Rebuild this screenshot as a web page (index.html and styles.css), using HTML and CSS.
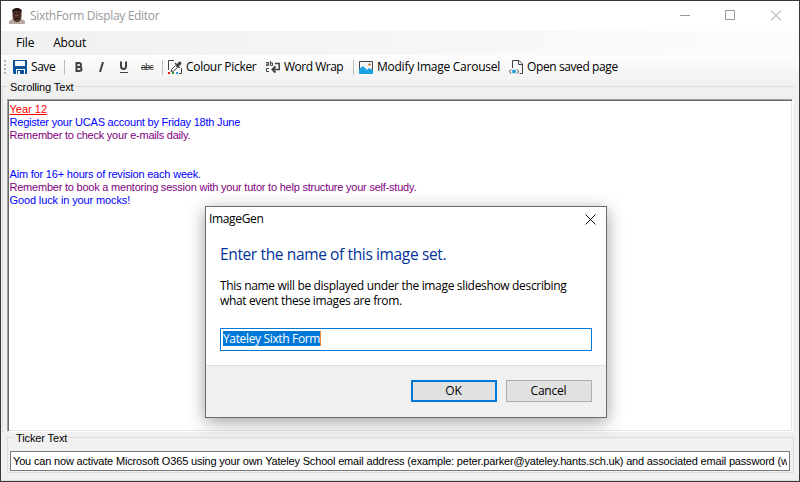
FILE: index.html
```
<!DOCTYPE html>
<html lang="en">
<head>
<meta charset="utf-8">
<title>SixthForm Display Editor</title>
<link rel="stylesheet" href="styles.css">
</head>
<body>
<div class="window">
  <header class="titlebar">
    <svg class="avatar" width="16" height="16" viewBox="0 0 16 16"><path d="M0 16V13L5 10H11L16 13V16Z" fill="#b9a7a0"/><path d="M3.500 2Q8-2 12.500 2V8Q12 14 8 14Q4 14 3.500 8Z" fill="#4d2f25"/><path d="M3.500 4V2Q8-2 12.500 2V4Q8 2 3.500 4Z" fill="#20130f"/><path d="M5 5.500H7M9 5.500H11M6 10.500H10" stroke="#24130e"/><path d="M6 7H9V8H6Z" fill="#795044"/></svg>
    <span class="title">SixthForm Display Editor</span>
    <svg class="controls" width="102" height="12" viewBox="0 0 102 12" fill="none" stroke="#999"><path d="M0 5.500H10"/><path d="M45.500 .5H54.500V9.500H45.500Z"/><path d="M91 .5L101 10.500M101 .5L91 10.500"/></svg>
  </header>
  <nav class="menu"><span class="file">File</span><span class="about">About</span></nav>
  <div class="toolbar">
    <i class="grip"></i>
    <svg class="i-save" width="14" height="14" viewBox="0 0 14 14"><path d="M0 0H14V14H12V9H3V14H1L0 13Z" fill="#0b539b"/><path d="M2 1H12V6H2Z" fill="#fafafa"/><path d="M4 10H11V14H7V11H5V14H4Z" fill="#0b539b"/><path d="M5 11H7V14H5Z" fill="#fafafa"/></svg>
    <span class="t-save">Save</span>
    <i class="sep s1"></i>
    <svg class="i-format" width="55" height="14" viewBox="0 0 55 14" fill="none" stroke="#414141"><path d="M2 3H5Q7 3 7 5Q7 7 5 7H2M5 7Q7.500 7 7.500 9Q7.500 11 5.500 11H2M2.500 2V12" stroke-width="2"/><path d="M29 2L26 12" stroke-width="2"/><path d="M47 1.500V6Q47 9 49.500 9Q52 9 52 6V1.500" stroke-width="2"/><path d="M46 12.500H54"/></svg>
    <span class="strike">abc</span>
    <i class="sep s2"></i>
    <svg class="i-picker" width="15" height="15" viewBox="0 0 15 15"><path d="M.5 10V.5H6M11 13.500H13.500V8" fill="none" stroke="#424242"/><path d="M3 11.500L3.500 9.500L7.500 5.500L9.500 7.500L5.500 11Z" fill="none" stroke="#424242"/><path d="M6.500 3.500L7.500 2.500L9 4L11 1.500L13 2L13.500 4L11 6L12 7.500L11 8.500Z" fill="#424242"/><path d="M0 12H2V14H0Z" fill="#e51400"/><path d="M4 12H6V14H4Z" fill="#339933"/><path d="M8 12H10V14H8Z" fill="#1ba1e2"/></svg>
    <span class="t-picker">Colour Picker</span>
    <svg class="i-wrap" width="15" height="13" viewBox="0 0 15 13" fill="none" stroke="#424242"><path d="M0 1.500H2.500V4.500H.5V3H2.500M4.500 0V4.500H6.500V2H4.500M3 7.500H.5V10.500H3"/><path d="M9 2.500H13.250V8.500H7" stroke-width="1.500"/><path d="M9.500 5.500L6.500 8.500L9.500 11.500" stroke-width="2"/></svg>
    <span class="t-wrap">Word Wrap</span>
    <i class="sep s3"></i>
    <svg class="i-image" width="14" height="13" viewBox="0 0 14 13"><path d="M.5.5H13.500V12.500H.5Z" fill="#f5f3f2" stroke="#424242"/><path d="M0 8L4 5L8 9L10 7L14 9V13H0Z" fill="#1ba1e2"/><path d="M9 3.500H12M10.500 2V5" stroke="#c58a3b"/></svg>
    <span class="t-image">Modify Image Carousel</span>
    <svg class="i-page" width="15" height="15" viewBox="0 0 15 15" fill="none" stroke="#424242"><path d="M3.500 8V.5H10L13.500 4V13.500H10.500M9.500 .5V4.500H13.500"/><path d="M2 9.500L.5 11.500L2 13.500M8 9.500L9.500 11.500L8 13.500"/><circle cx="5" cy="11.500" r="2" fill="#1ba1e2" stroke="none"/></svg>
    <span class="t-page">Open saved page</span>
  </div>
  <main class="content">
    <section class="group scrolling">
      <h2><span class="g-scroll">Scrolling Text</span></h2>
      <div class="editor">
        <p class="red"><span class="l1">Year 12</span></p>
        <p class="blue"><span class="l2">Register your UCAS account by Friday 18th June</span></p>
        <p class="purple"><span class="l3">Remember to check your e-mails daily.</span></p>
        <p></p><p></p>
        <p class="blue"><span class="l4">Aim for 16+ hours of revision each week.</span></p>
        <p class="purple"><span class="l5">Remember to book a mentoring session with your tutor to help structure your self-study.</span></p>
        <p class="blue"><span class="l6">Good luck in your mocks!</span></p>
      </div>
    </section>
    <section class="group ticker">
      <h2><span class="g-ticker">Ticker Text</span></h2>
      <div class="ticker-input"><div class="clip"><span class="l7">You can now activate Microsoft O365 using your own Yateley School email address (example: peter.parker@yateley.hants.sch.uk) and associated email password (w</span></div></div>
    </section>
  </main>
</div>
<div class="dialog">
  <div class="dialog-title"><span class="d-title">ImageGen</span><svg width="11" height="11" viewBox="0 0 11 11" fill="none" stroke="#111"><path d="M.5.5L10.500 10.500M10.500.5L.5 10.500"/></svg></div>
  <div class="dialog-body">
    <h1><span class="d-head">Enter the name of this image set.</span></h1>
    <p><span class="d-one">This name will be displayed under the image slideshow describing</span><br><span class="d-two">what event these images are from.</span></p>
    <div class="field"><span class="selected">Yateley Sixth Form</span></div>
  </div>
  <footer><div class="button primary"><span class="d-ok">OK</span></div><div class="button"><span class="d-cancel">Cancel</span></div></footer>
</div>
</body>
</html>
```
FILE: styles.css
```
* { box-sizing: border-box; }
body { margin: 0; width: 800px; height: 482px; overflow: hidden; background: #f0f0f0; color: #000; font: 12px/16px "Open Sans", "Noto Sans", sans-serif; }
p, h1, h2 { margin: 0; font-weight: normal; }
span { white-space: nowrap; }
svg { flex: none; display: block; }
.window { width: 800px; height: 482px; border: 1px solid #39373a; display: flex; flex-direction: column; }
.titlebar { height: 30px; background: #fff; display: flex; align-items: center; color: #999; padding: 0 17px 0 8px; }
.title { margin-left: 5px; letter-spacing: -.33px; }
.controls { margin-left: auto; }
.menu { height: 24px; display: flex; align-items: center; padding-left: 15px; gap: 19px; background: linear-gradient(90deg, #f0f0f0, #fcfcfc); letter-spacing: -.2px; }
.toolbar { height: 31px; flex: none; display: flex; align-items: center; padding: 0 0 7px 3px; background: linear-gradient(#fdfdfd, #f0f0f0); }
.grip { width: 2px; height: 14px; background: repeating-linear-gradient(#b5b5b5 0 2px, transparent 2px 4px); margin-right: 7px; flex: none; }
.t-save { margin-left: 4px; width: 24px; letter-spacing: -.45px; }
.t-picker { margin-left: 3px; width: 71px; letter-spacing: -.3px; }
.t-wrap { margin-left: 3px; width: 60px; letter-spacing: -.5px; }
.t-image { margin-left: 4px; width: 123px; letter-spacing: -.25px; }
.t-page { margin-left: 3px; letter-spacing: -.4px; }
.sep { width: 1px; height: 15px; background: #bdbdbd; flex: none; }
.s1 { margin-left: 9px; }
.i-format { margin-left: 9px; }
.strike { font: 9px/12px "Liberation Sans", sans-serif; color: #333; text-decoration: line-through; letter-spacing: -.8px; margin-left: 12px; width: 12px; }
.s2 { margin-left: 9px; margin-right: 5px; }
.i-wrap { margin-left: 9px; }
.s3 { margin-left: 9px; margin-right: 5px; }
.i-page { margin-left: 9px; }
.content { flex: 1; padding: 0 5px 2px 1px; background: #f0f0f0; border-bottom: 1px solid #dcdcdc; font: 11px/13px "Liberation Sans", sans-serif; }
.group { border: 1px solid #dcdcdc; }
.group h2 { font-size: 11px; line-height: 13px; margin-top: -6px; padding-left: 5px; height: 13px; }
.group h2 span { background: #f0f0f0; padding: 0 2px; display: inline-block; letter-spacing: -.12px; }
.scrolling { height: 346px; border-bottom: 0; border-right: 0; padding: 0 1px 0 4px; }
.group.scrolling h2 { padding-left: 1px; }
.editor { height: 333px; margin-top: 5px; background: #fff; border: 1px solid #a0a0a0; border-right-color: #fff; border-bottom-color: #fff; box-shadow: inset 1px 1px #696969, inset -1px -1px #e3e3e3; padding: 3px 0 0 1.5px; }
.editor p { height: 13px; }
.red { color: #f00; text-decoration: underline; }
.blue { color: #00f; }
.purple { color: #800080; }
.l2 { letter-spacing: -.21px; }
.l3 { letter-spacing: -.23px; }
.l4 { letter-spacing: -.19px; }
.l5 { letter-spacing: -.22px; }
.l6 { letter-spacing: -.12px; }
.l7 { letter-spacing: -.175px; }
.ticker { margin: 5px 0 0 5px; height: 36px; padding: 0 3px 0 2px; }
.group.ticker h2 { padding-left: 4px; }
.ticker-input { margin-top: 6px; height: 20px; background: #fff; border: 1px solid #7a7a7a; padding: 3px 2px; }
.clip { overflow: hidden; }
.dialog { position: absolute; left: 205px; top: 206px; width: 402px; height: 212px; border: 1px solid #6d6d6d; background: #fff; box-shadow: 0 4px 16px rgba(0,0,0,.38); display: flex; flex-direction: column; }
.dialog-title { height: 24px; display: flex; align-items: center; justify-content: space-between; padding: 0 10px 0 3px; }
.d-title { letter-spacing: -.35px; }
.dialog-body { height: 134px; padding: 12px 14px 0; }
.dialog-body h1 { color: #003399; font-size: 15.5px; line-height: 22px; letter-spacing: -.37px; }
.dialog-body p { margin-top: 13px; line-height: 15px; }
.dialog-body p span { display: inline-block; height: 15px; vertical-align: top; }
.d-one { letter-spacing: -.33px; }
.d-two { letter-spacing: -.36px; }
.field { margin-top: 20px; height: 23px; border: 1px solid #0078d7; padding: 2px 2px; display: flex; }
.selected { background: #0078d7; color: #fff; height: 15px; line-height: 15px; border-right: 1px solid #f28733; display: block; letter-spacing: -.35px; }
.dialog footer { flex: 1; background: #f0f0f0; border-top: 1px solid #dfdfdf; display: flex; justify-content: flex-end; gap: 9px; padding: 14px 14px 0; }
.button { width: 86px; height: 22px; background: #e1e1e1; border: 1px solid #adadad; display: flex; align-items: center; justify-content: center; letter-spacing: -.2px; padding-right: 1px; }
.primary { border: 2px solid #0078d7; }
```
